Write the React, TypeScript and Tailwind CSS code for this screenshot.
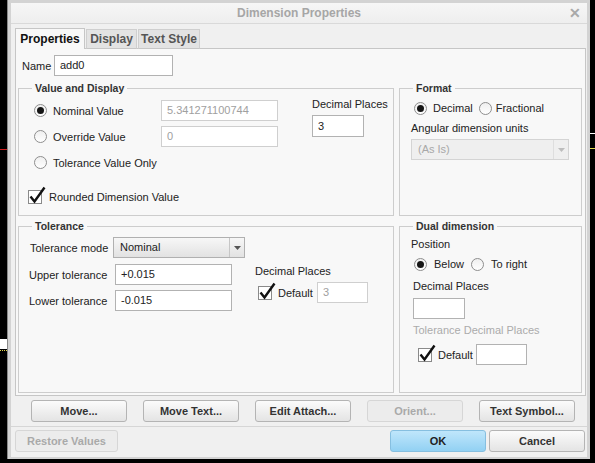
import React from 'react';

type Kids = { children?: React.ReactNode; className?: string };

function Radio({ checked }: { checked?: boolean }) {
  return (
    <span className="flex h-[13px] w-[13px] shrink-0 items-center justify-center rounded-full border border-[#8e8e8e] bg-gradient-to-b from-[#efefef] to-white">
      {checked && <span className="h-[7px] w-[7px] rounded-full bg-[#151515]" />}
    </span>
  );
}

function Check() {
  return (
    <span className="relative h-[14px] w-[14px] shrink-0 border border-[#8a8a8a] bg-white">
      <svg className="absolute left-0 -top-[5px]" width="18" height="19" viewBox="0 0 18 19">
        <path d="M1.5 10.5 L5.5 15.5 L15.5 1.5" fill="none" stroke="#111" strokeWidth="2.4" strokeLinejoin="miter" />
      </svg>
    </span>
  );
}

function TextBox({ value, className = '', disabled }: { value?: string; className?: string; disabled?: boolean }) {
  return (
    <div
      className={`flex h-[21px] items-center border bg-white px-[5px] text-[11px] ${
        disabled ? 'border-[#cfcfcf] text-[#a0a0a0]' : 'border-[#b2b2b2] text-[#222]'
      } ${className}`}
    >
      {value}
    </div>
  );
}

function Select({ value, className = '', disabled }: { value: string; className?: string; disabled?: boolean }) {
  return (
    <div
      className={`flex h-[21px] items-center border ${
        disabled
          ? 'border-[#d4d4d4] bg-[#efefef] text-[#a8a8a8]'
          : 'border-[#b0b0b0] bg-gradient-to-b from-[#f7f7f7] to-[#e2e2e2] text-[#222]'
      } ${className}`}
    >
      <span className="flex-1 pl-[6px] text-[11px]">{value}</span>
      <span className={`flex h-full w-[15px] items-center justify-center border-l ${disabled ? 'border-[#dedede]' : 'border-[#c6c6c6]'}`}>
        <svg width="7" height="4" viewBox="0 0 7 4">
          <path d="M0 0h7L3.5 4z" fill={disabled ? '#bdbdbd' : '#555'} />
        </svg>
      </span>
    </div>
  );
}

function Btn({ label, className = '', disabled, primary }: { label: string; className?: string; disabled?: boolean; primary?: boolean }) {
  const look = primary
    ? 'border-[#86bfe0] bg-gradient-to-b from-[#bfe6fb] to-[#92d1f3] text-[#222]'
    : disabled
    ? 'border-[#d6d6d6] bg-[#ececec] text-[#a9a9a9]'
    : 'border-[#b4b4b4] bg-gradient-to-b from-[#fbfbfb] to-[#e4e4e4] text-[#333]';
  return (
    <div className={`flex h-[22px] w-[96px] items-center justify-center rounded-[3px] border text-[11px] font-bold ${look} ${className}`}>
      {label}
    </div>
  );
}

function GroupBox({ title, className = '', children }: Kids & { title: string }) {
  return (
    <div className={`relative border border-[#cdcdcd] ${className}`}>
      <span className="absolute left-[13px] -top-[8px] bg-[#f8f8f8] px-[3px] text-[10.5px] font-bold leading-[14px] text-[#333]">
        {title}
      </span>
      {children}
    </div>
  );
}

function Label({ children, className = '' }: Kids) {
  return <span className={`text-[11px] leading-[14px] text-[#222] ${className}`}>{children}</span>;
}

export default function App() {
  return (
    <div className="relative h-[463px] w-[595px] overflow-hidden bg-black font-['Liberation_Sans',Arial,sans-serif]">
      {/* bits of the desktop showing behind the dialog */}
      <div className="absolute left-0 top-[149px] h-px w-[7px] bg-[#d02020]" />
      <div className="absolute left-0 top-[339px] h-[10px] w-[7px] bg-white" />
      <div className="absolute left-0 top-[350px] h-px w-[7px] border-t border-dotted border-[#e6d84a]" />
      <div className="absolute right-0 top-[133px] h-px w-[5px] bg-white" />
      <div className="absolute right-0 top-[148px] h-px w-[5px] bg-[#e6d84a]" />

      {/* dialog window */}
      <div className="absolute left-[7px] top-0 h-[459px] w-[583px] border-l border-[#8a8a8a] bg-[#d3d3d3] pb-[2px] pl-[3px] pr-[3px] pt-[3px]">
        <div className="flex h-[454px] w-[576px] flex-col bg-[#f0f0f0]">
          {/* title bar */}
          <div className="relative flex h-[21px] shrink-0 items-center justify-center border-b border-[#d9d9d9] bg-gradient-to-b from-[#f6f6f6] to-[#eeeeee]">
            <span className="text-[12px] font-bold text-[#a6a6a6]">Dimension Properties</span>
            <span className="absolute right-[6px] top-[2px] text-[14px] font-bold leading-[16px] text-[#a9a9a9]">✕</span>
          </div>

          {/* tabs */}
          <div className="relative z-10 -mb-px ml-[4px] mt-[4px] flex items-end gap-[1px]">
            <div className="flex h-[21px] w-[70px] items-center justify-center border-x border-t border-[#c6c6c6] bg-[#f8f8f8] text-[12px] font-bold text-[#111]">
              Properties
            </div>
            <div className="flex h-[20px] w-[51px] items-center justify-center border border-[#cfcfcf] border-b-[#c6c6c6] bg-[#e3e3e3] text-[12px] font-bold text-[#555]">
              Display
            </div>
            <div className="flex h-[20px] w-[62px] items-center justify-center border border-[#cfcfcf] border-b-[#c6c6c6] bg-[#e3e3e3] text-[12px] font-bold text-[#555]">
              Text Style
            </div>
          </div>

          {/* tab panel */}
          <div className="ml-[4px] w-[571px] border border-[#c6c6c6] bg-[#f8f8f8] px-[2px] pb-[2px]">
            <div className="mt-[6px] flex items-center pl-[4px]">
              <Label className="w-[32px]">Name</Label>
              <TextBox value="add0" className="w-[119px]" />
            </div>

            <div className="mt-[12px] flex gap-[5px]">
              <GroupBox title="Value and Display" className="h-[128px] w-[376px]">
                <div className="flex">
                  <div className="w-[260px] pt-[11px]">
                    <div className="flex flex-col gap-[5px] pl-[15px]">
                      <div className="flex h-[21px] items-center">
                        <div className="flex w-[127px] items-center gap-[6px]">
                          <Radio checked />
                          <Label>Nominal Value</Label>
                        </div>
                        <TextBox value="5.341271100744" disabled className="w-[117px]" />
                      </div>
                      <div className="flex h-[21px] items-center">
                        <div className="flex w-[127px] items-center gap-[6px]">
                          <Radio />
                          <Label>Override Value</Label>
                        </div>
                        <TextBox value="0" disabled className="w-[117px]" />
                      </div>
                      <div className="flex h-[21px] items-center gap-[6px]">
                        <Radio />
                        <Label>Tolerance Value Only</Label>
                      </div>
                    </div>
                    <div className="mt-[13px] flex h-[21px] items-center gap-[7px] pl-[9px]">
                      <Check />
                      <Label>Rounded Dimension Value</Label>
                    </div>
                  </div>
                  <div className="ml-[33px] flex flex-col pt-[8px]">
                    <Label>Decimal Places</Label>
                    <TextBox value="3" className="mt-[4px] h-[22px] w-[52px]" />
                  </div>
                </div>
              </GroupBox>

              <GroupBox title="Format" className="h-[128px] w-[183px]">
                <div className="flex flex-col pl-[11px] pt-[12px]">
                  <div className="ml-[3px] flex h-[14px] items-center">
                    <Radio checked />
                    <Label className="ml-[6px]">Decimal</Label>
                    <span className="ml-[6px]">
                      <Radio />
                    </span>
                    <Label className="ml-[4px]">Fractional</Label>
                  </div>
                  <Label className="mt-[6px]">Angular dimension units</Label>
                  <Select value="(As Is)" disabled className="mt-[4px] w-[158px]" />
                </div>
              </GroupBox>
            </div>

            <div className="mt-[10px] flex gap-[5px]">
              <GroupBox title="Tolerance" className="h-[167px] w-[376px]">
                <div className="flex">
                  <div className="flex flex-col pl-[11px] pt-[10px]">
                    <div className="flex h-[21px] items-center">
                      <Label className="w-[83px]">Tolerance mode</Label>
                      <Select value="Nominal" className="w-[132px]" />
                    </div>
                    <div className="mt-[6px] flex h-[21px] items-center">
                      <Label className="-ml-[1px] w-[86px]">Upper tolerance</Label>
                      <TextBox value="+0.015" className="w-[117px]" />
                    </div>
                    <div className="mt-[5px] flex h-[21px] items-center">
                      <Label className="-ml-[1px] w-[86px]">Lower tolerance</Label>
                      <TextBox value="-0.015" className="w-[117px]" />
                    </div>
                  </div>
                  <div className="ml-[10px] flex flex-col pt-[37px]">
                    <Label>Decimal Places</Label>
                    <div className="mt-[4px] flex h-[21px] items-center">
                      <div className="flex w-[62px] items-center gap-[6px] pl-[3px]">
                        <Check />
                        <Label>Default</Label>
                      </div>
                      <TextBox value="3" disabled className="w-[51px]" />
                    </div>
                  </div>
                </div>
              </GroupBox>

              <GroupBox title="Dual dimension" className="h-[167px] w-[183px]">
                <div className="flex flex-col pl-[11px] pt-[10px]">
                  <Label>Position</Label>
                  <div className="ml-[3px] mt-[6px] flex h-[14px] items-center">
                    <Radio checked />
                    <Label className="ml-[7px]">Below</Label>
                    <span className="ml-[7px]">
                      <Radio />
                    </span>
                    <Label className="ml-[7px]">To right</Label>
                  </div>
                  <Label className="ml-[2px] mt-[8px]">Decimal Places</Label>
                  <TextBox className="ml-[2px] mt-[5px] w-[52px]" />
                  <Label className="ml-[2px] mt-[4px] !text-[#ababab]">Tolerance Decimal Places</Label>
                  <div className="ml-[7px] mt-[7px] flex h-[21px] items-center">
                    <div className="flex w-[58px] items-center gap-[6px]">
                      <Check />
                      <Label>Default</Label>
                    </div>
                    <TextBox className="w-[51px]" />
                  </div>
                </div>
              </GroupBox>
            </div>
          </div>

          {/* action buttons */}
          <div className="mt-[4px] flex gap-[16px] pl-[20px]">
            <Btn label="Move..." />
            <Btn label="Move Text..." />
            <Btn label="Edit Attach..." />
            <Btn label="Orient..." disabled />
            <Btn label="Text Symbol..." />
          </div>

          <div className="mt-[4px] h-px bg-[#d6d6d6]" />

          <div className="mt-[3px] flex items-center pl-[4px] pr-[2px]">
            <Btn label="Restore Values" disabled className="w-[103px]" />
            <div className="ml-auto flex gap-[3px]">
              <Btn label="OK" primary />
              <Btn label="Cancel" />
            </div>
          </div>
        </div>
      </div>
    </div>
  );
}
